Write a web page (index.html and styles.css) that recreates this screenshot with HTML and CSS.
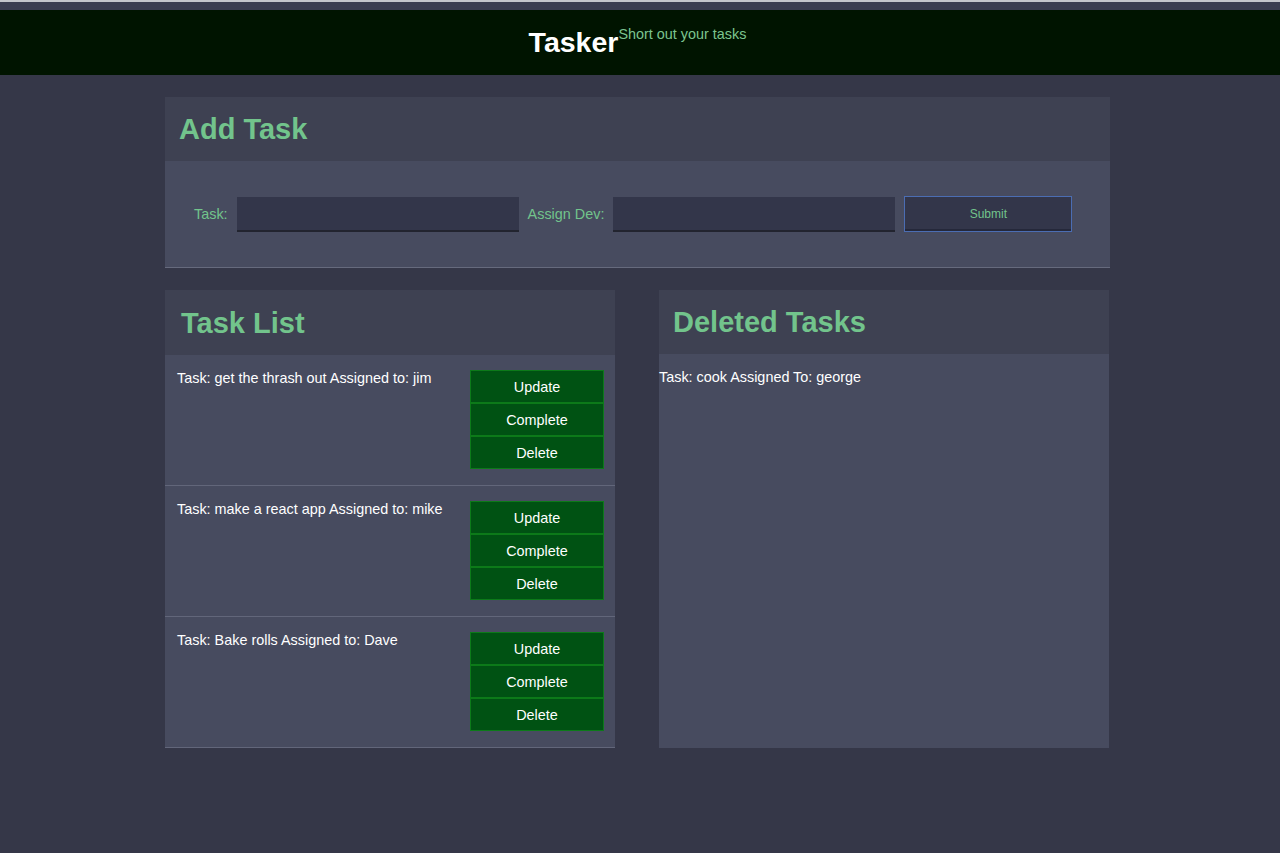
FILE: index.html
```html
<!DOCTYPE html>
<html lang="en">
<head>
<meta charset="utf-8">
<title>Tasker</title>
<link rel="stylesheet" href="styles.css">
</head>
<body>
<div class="topstrip"></div>
<header class="site-header">
  <div class="brand">
    <h1 class="brand-title">Tasker<sup class="brand-sub">Short out your tasks</sup></h1>
  </div>
</header>
<main class="page">
  <section class="card add-card">
    <div class="card-head"><h2 class="card-title">Add Task</h2></div>
    <form class="add-form">
      <label class="field-label" for="task">Task:</label>
      <input class="field-input" id="task" type="text">
      <label class="field-label" for="dev">Assign Dev:</label>
      <input class="field-input" id="dev" type="text">
      <button class="submit-btn" type="button">Submit</button>
    </form>
  </section>

  <div class="columns">
    <section class="card list-card">
      <div class="card-head list-head"><h2 class="card-title">Task List</h2></div>
      <div class="task-item">
        <p class="task-text">Task: get the thrash out Assigned to: jim</p>
        <div class="task-actions">
          <button class="act-btn" type="button">Update</button>
          <button class="act-btn" type="button">Complete</button>
          <button class="act-btn" type="button">Delete</button>
        </div>
      </div>
      <div class="task-item">
        <p class="task-text">Task: make a react app Assigned to: mike</p>
        <div class="task-actions">
          <button class="act-btn" type="button">Update</button>
          <button class="act-btn" type="button">Complete</button>
          <button class="act-btn" type="button">Delete</button>
        </div>
      </div>
      <div class="task-item">
        <p class="task-text">Task: Bake rolls Assigned to: Dave</p>
        <div class="task-actions">
          <button class="act-btn" type="button">Update</button>
          <button class="act-btn" type="button">Complete</button>
          <button class="act-btn" type="button">Delete</button>
        </div>
      </div>
    </section>

    <section class="card deleted-card">
      <div class="card-head"><h2 class="card-title">Deleted Tasks</h2></div>
      <div class="deleted-body">
        <p class="deleted-text">Task: cook Assigned To: george</p>
      </div>
    </section>
  </div>
</main>
</body>
</html>
```

FILE: styles.css
```css
* { box-sizing: border-box; }

html, body {
  margin: 0;
  padding: 0;
}

body {
  background: #353748;
  font-family: "Liberation Sans", Arial, sans-serif;
  color: #ffffff;
  min-height: 853px;
}

.topstrip {
  height: 10px;
  background: #3b3d51;
  border-top: 2px solid #c4c5cc;
}

.site-header {
  background: #001400;
  height: 65px;
}

.brand {
  width: 1275px;
  display: flex;
  justify-content: center;
}

.brand-title {
  margin: 0;
  padding-top: 16px;
  font-size: 28.5px;
  font-weight: bold;
  line-height: 32px;
  color: #ffffff;
}

.brand-sub {
  font-size: 14.4px;
  font-weight: normal;
  color: #7cc48f;
  vertical-align: top;
  line-height: 16px;
  position: relative;
  top: 0;
}

.page {
  width: 945px;
  margin: 22px 0 0 165px;
}

.card-head {
  height: 64px;
  background: #3e4152;
  display: flex;
  align-items: center;
  padding-left: 14px;
}

.list-head {
  padding-left: 16px;
  height: 65px;
}

.card-title {
  margin: 0;
  font-size: 29px;
  font-weight: bold;
  color: #72c48c;
  line-height: 32px;
}

.add-form {
  background: #474b5f;
  height: 107px;
  border-bottom: 1px solid #666a7d;
  display: flex;
  align-items: center;
  gap: 9px;
  padding-left: 29px;
}

.field-label {
  color: #72c48c;
  font-size: 14.4px;
}

.field-input {
  width: 282px;
  height: 35px;
  background: #33364a;
  border: none;
  border-bottom: 2px solid #22242f;
  color: #ffffff;
  padding: 0 6px;
  font-family: inherit;
}

.submit-btn {
  width: 168px;
  height: 36px;
  background: #33364a;
  border: 1px solid #4b6db3;
  box-shadow: inset 0 -2px 0 #25283a;
  color: #72c48c;
  font-family: inherit;
  font-size: 12px;
}

.columns {
  margin-top: 22px;
  display: grid;
  grid-template-columns: 450px 450px;
  column-gap: 44px;
}

.card {
  display: flex;
  flex-direction: column;
}

.list-card {
  background: #474b5f;
}

.task-item {
  display: flex;
  justify-content: space-between;
  align-items: flex-start;
  padding: 15px 11px 16px 12px;
  border-bottom: 1px solid #62667a;
  background: #474b5f;
}

.task-text {
  margin: 0;
  font-size: 14.4px;
  line-height: 16px;
}

.task-actions {
  display: flex;
  flex-direction: column;
  width: 134px;
}

.act-btn {
  height: 33px;
  background: #005213;
  border: 1px solid #0c7a19;
  color: #ffffff;
  font-family: inherit;
  font-size: 14.4px;
  padding: 0;
}

.deleted-card {
  background: #474b5f;
}

.deleted-body {
  flex: 1;
  padding-top: 15px;
}

.deleted-text {
  margin: 0;
  font-size: 14.4px;
  line-height: 16px;
}
```
